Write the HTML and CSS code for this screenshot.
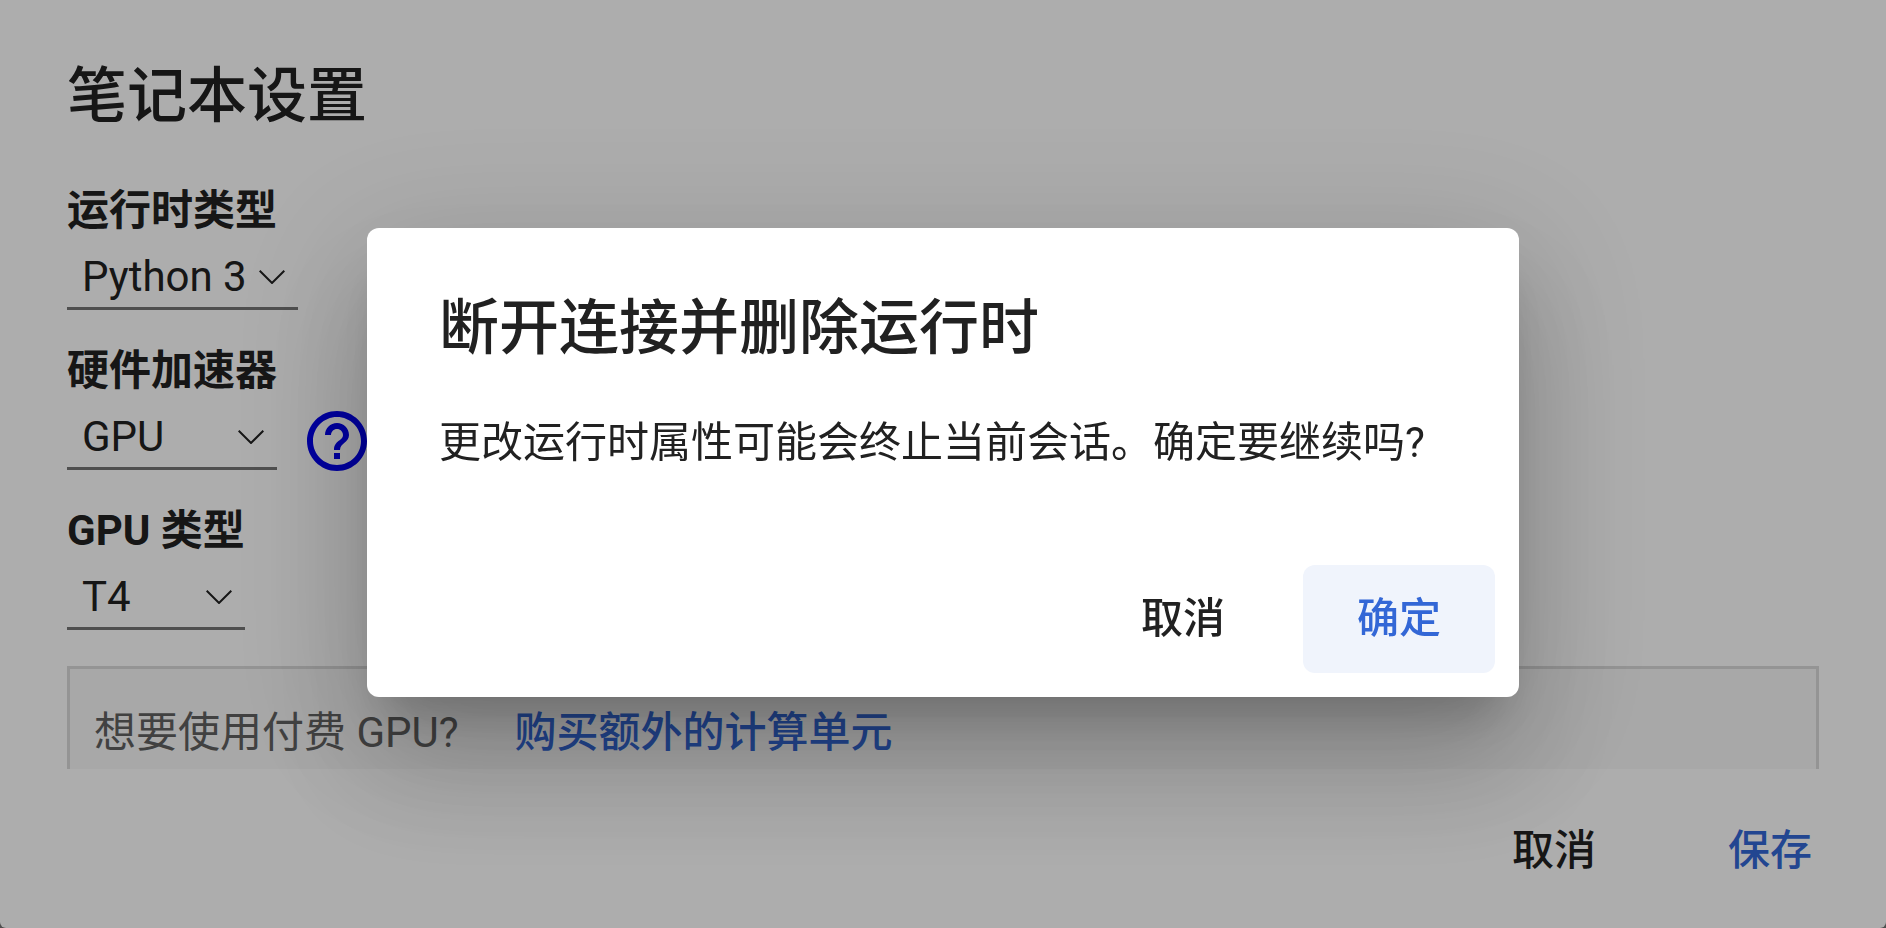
FILE: index.html
```html
<!DOCTYPE html>
<html lang="zh-CN">
<head>
  <meta charset="UTF-8">
  <meta name="viewport" content="width=device-width, initial-scale=1.0">
  <title>笔记本设置</title>
  <link rel="stylesheet" href="styles.css">
</head>
<body>
  <main class="settings">
    <h1>笔记本设置</h1>
    <form class="settings-form" id="settingsForm">
      <div class="field">
        <label for="runtimeType">运行时类型</label>
        <div class="select-wrap runtime">
          <select id="runtimeType">
            <option>Python 3</option>
          </select>
          <svg class="chevron" viewBox="0 0 26 14"><path d="M.7.700l12.300 12.300L25.300.700"/></svg>
        </div>
      </div>

      <div class="field">
        <label for="accelerator">硬件加速器</label>
        <div class="field-row">
          <div class="select-wrap accelerator">
            <select id="accelerator">
              <option>GPU</option>
            </select>
            <svg class="chevron" viewBox="0 0 26 14"><path d="M.7.700l12.300 12.300L25.300.700"/></svg>
          </div>
          <a class="help" href="#" aria-label="帮助">
            <svg viewBox="0 0 24 24"><path d="M11 18h2v-2h-2v2zm1-16C6.480 2 2 6.480 2 12s4.480 10 10 10 10-4.480 10-10S17.520 2 12 2zm0 18c-4.410 0-8-3.590-8-8s3.590-8 8-8 8 3.590 8 8-3.590 8-8 8zm0-14c-2.210 0-4 1.790-4 4h2c0-1.100.9-2 2-2s2 .9 2 2c0 2-3 1.750-3 5h2c0-2.250 3-2.500 3-5 0-2.210-1.790-4-4-4z"/></svg>
          </a>
        </div>
      </div>

      <div class="field">
        <label for="gpuType">GPU 类型</label>
        <div class="select-wrap gpu">
          <select id="gpuType">
            <option>T4</option>
          </select>
          <svg class="chevron" viewBox="0 0 26 14"><path d="M.7.700l12.300 12.300L25.300.700"/></svg>
        </div>
      </div>

      <div class="upsell">
        <span>想要使用付费 GPU?</span>
        <a href="#">购买额外的计算单元</a>
      </div>
    </form>
    <footer class="actions settings-actions">
      <button type="button">取消</button>
      <button type="submit" form="settingsForm" class="primary">保存</button>
    </footer>
  </main>

  <div class="overlay">
    <div class="modal" role="dialog" aria-modal="true" aria-labelledby="modalTitle">
      <h2 id="modalTitle">断开连接并删除运行时</h2>
      <p>更改运行时属性可能会终止当前会话。确定要继续吗?</p>
      <div class="actions">
        <button type="button">取消</button>
        <button type="button" class="primary focused">确定</button>
      </div>
    </div>
  </div>
</body>
</html>
```
FILE: styles.css
```css
* {
  box-sizing: border-box;
}
body {
  margin: 0;
  background-color: #757575;
  color: #212121;
  font-family: Roboto, "Noto Sans CJK SC", sans-serif;
  font-size: 42px;
  line-height: 60px;
}
h1, h2 {
  margin: 0;
  font-size: 60px;
  font-weight: 500;
  line-height: 84px;
}

/* notebook settings */
.settings {
  display: flex;
  flex-direction: column;
  height: 100vh;
  padding-top: 55px;
  background-color: #fff;
  border-radius: 0 0 6px 6px;
}
.settings h1 {
  padding: 0 67px;
}
.settings-form {
  flex: 1;
  min-height: 0;
  margin-top: 42px;
  padding: 0 67px;
  overflow: hidden;
}
.field {
  margin-bottom: 31px;
}
.field label {
  display: block;
  font-weight: 700;
}
.field-row {
  display: flex;
  align-items: flex-end;
  gap: 24px;
  height: 69px;
}
.select-wrap {
  position: relative;
}
.runtime {
  width: 231px;
}
.accelerator {
  width: 210px;
}
.gpu {
  width: 178px;
}
select {
  display: block;
  width: 100%;
  height: 69px;
  padding: 6px 0 0 15px;
  border: 0;
  border-bottom: 3px solid #757575;
  border-radius: 0;
  appearance: none;
  background: none;
  color: inherit;
  font: inherit;
}
.chevron {
  position: absolute;
  top: 29px;
  right: 13px;
  width: 26px;
  height: 14px;
  fill: none;
  stroke: #212121;
  stroke-width: 2;
  pointer-events: none;
}
.help {
  height: 65px;
}
.help svg {
  display: block;
  width: 72px;
  height: 72px;
  fill: #0000ee;
}
.upsell {
  display: flex;
  gap: 56px;
  margin-top: 36px;
  padding: 34px 24px;
  border: 3px solid #dadada;
  background-color: #f8f8f8;
  color: #616161;
}
.upsell a {
  color: #3367d6;
  font-weight: 500;
  text-decoration: none;
}

/* buttons */
.actions {
  display: flex;
  justify-content: flex-end;
  gap: 24px;
  padding: 24px;
}
.settings-actions {
  padding: 28px 20px 23px;
}
button {
  min-width: 192px;
  height: 108px;
  padding: 0 24px;
  border: 0;
  border-radius: 12px;
  background: none;
  color: #212121;
  font: inherit;
  font-weight: 500;
  cursor: pointer;
}
.primary {
  color: #3367d6;
}
.focused {
  background-color: #f0f4fc;
}

/* confirmation */
.overlay {
  position: fixed;
  inset: 0;
  display: flex;
  align-items: center;
  justify-content: center;
  padding-bottom: 3px;
  background-color: rgba(0, 0, 0, 0.32);
}
.modal {
  width: 90%;
  max-width: 1152px;
  padding-top: 59px;
  border-radius: 12px;
  background-color: #fff;
  box-shadow: 0 33px 45px -21px rgba(0, 0, 0, 0.2),
    0 72px 114px 9px rgba(0, 0, 0, 0.14),
    0 27px 138px 24px rgba(0, 0, 0, 0.12);
}
.modal h2 {
  padding: 0 72px;
}
.modal p {
  margin: 42px 72px 68px;
}
```
